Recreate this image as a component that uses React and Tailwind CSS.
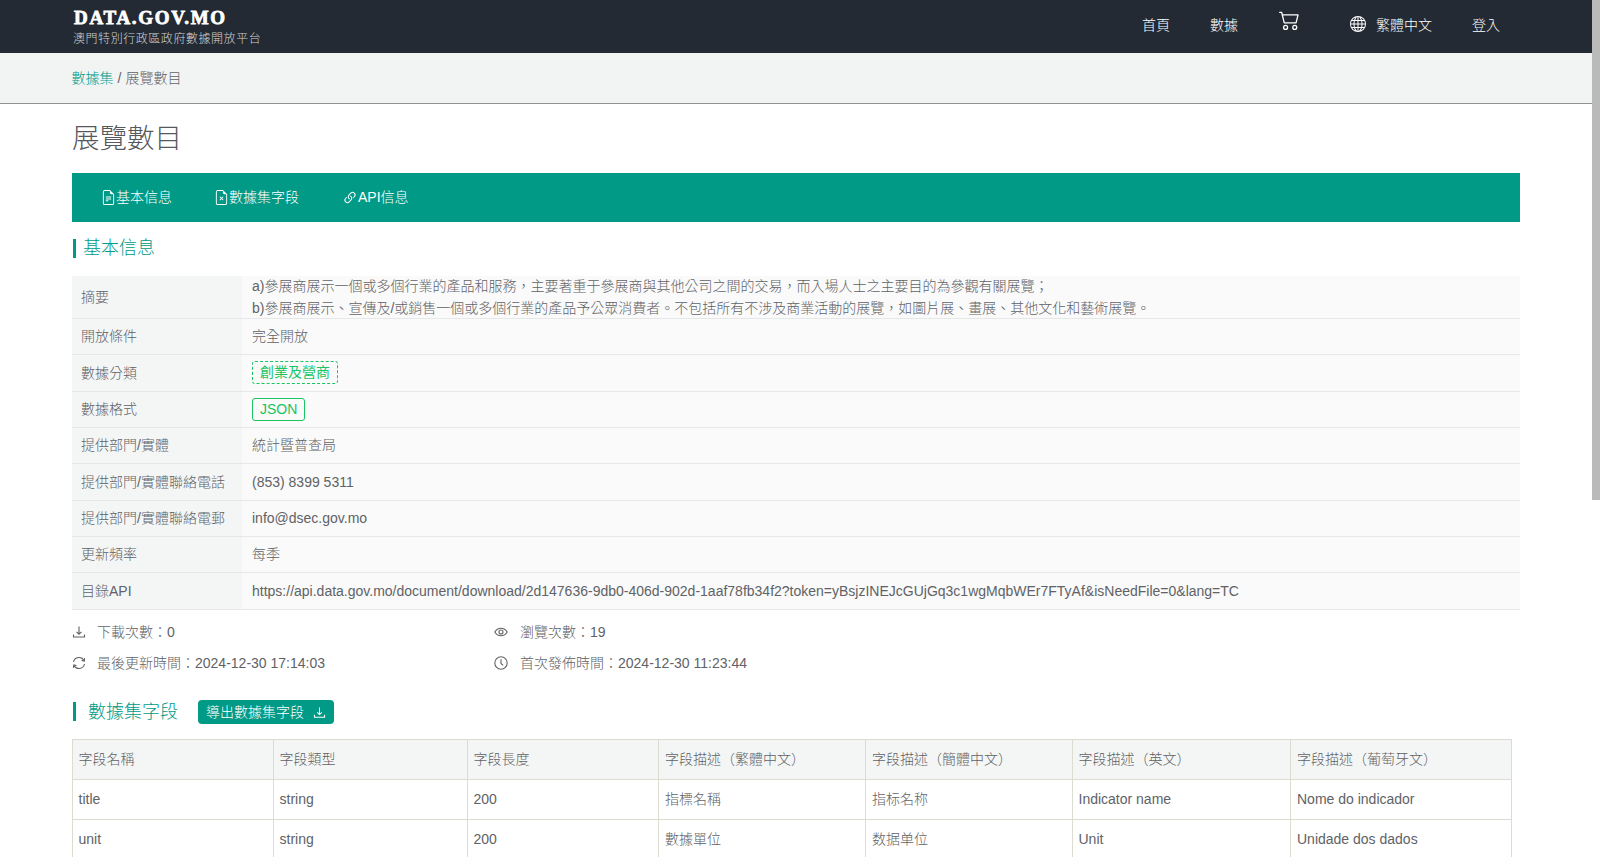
import React from "react";
import { BsCart2, BsGlobe, BsFileEarmarkText, BsFileEarmarkX, BsLink45Deg } from "react-icons/bs";

const font = "font-['Liberation_Sans','Noto_Sans_CJK_TC',sans-serif]";

const DownloadIcon = ({ className }) => (
  <svg viewBox="0 0 14 14" fill="none" stroke="currentColor" strokeWidth="1.1" className={className}>
    <path d="M7 1.5v7.5M4.5 6.8 7 9.2l2.5-2.4M1.5 9.5v2.5h11V9.5" />
  </svg>
);

const RefreshIcon = ({ className }) => (
  <svg viewBox="0 0 14 14" fill="none" stroke="currentColor" strokeWidth="1.1" className={className}>
    <path d="M1.5 6A5.6 5.6 0 0 1 12 4.6M12.5 8A5.6 5.6 0 0 1 2 9.4" />
    <path d="M12.6 2.2 12.2 5 9.6 4.4M1.4 11.8 1.8 9l2.6.6" />
  </svg>
);

const EyeIcon = ({ className }) => (
  <svg viewBox="0 0 14 14" fill="none" stroke="currentColor" strokeWidth="1.1" className={className}>
    <path d="M.8 7C2.2 4.6 4.4 3.2 7 3.2s4.8 1.4 6.2 3.8c-1.4 2.4-3.6 3.8-6.2 3.8S2.2 9.4.8 7Z" />
    <circle cx="7" cy="7" r="2" />
  </svg>
);

const ClockIcon = ({ className }) => (
  <svg viewBox="0 0 14 14" fill="none" stroke="currentColor" strokeWidth="1.1" className={className}>
    <circle cx="7" cy="7" r="6.2" />
    <path d="M7 3.2V7.4l2.2 2" />
  </svg>
);

const infoRows = [
  ["開放條件", "完全開放"],
  ["數據分類", <span className="mb-[1px] inline-flex h-[23px] items-center rounded-[3px] border border-dashed border-[#19c463] px-[7px] font-normal text-[#19c463]">創業及營商</span>],
  ["數據格式", <span className="inline-flex h-[23px] items-center rounded-[3px] border border-[#19c463] px-[7px] text-[#19c463]">JSON</span>],
  ["提供部門/實體", "統計暨普查局"],
  ["提供部門/實體聯絡電話", "(853) 8399 5311"],
  ["提供部門/實體聯絡電郵", "info@dsec.gov.mo"],
  ["更新頻率", "每季"],
  ["目錄API", "https://api.data.gov.mo/document/download/2d147636-9db0-406d-902d-1aaf78fb34f2?token=yBsjzINEJcGUjGq3c1wgMqbWEr7FTyAf&isNeedFile=0&lang=TC"],
];

const fieldHead = ["字段名稱", "字段類型", "字段長度", "字段描述（繁體中文）", "字段描述（簡體中文）", "字段描述（英文）", "字段描述（葡萄牙文）"];
const fieldRows = [
  ["title", "string", "200", "指標名稱", "指标名称", "Indicator name", "Nome do indicador"],
  ["unit", "string", "200", "數據單位", "数据单位", "Unit", "Unidade dos dados"],
];
const colWidths = ["w-[200.5px]", "w-[194px]", "w-[191.5px]", "w-[207px]", "w-[206.5px]", "w-[218.5px]", "w-[221px]"];

const Stat = ({ icon: Icon, label, value, className, gap }) => (
  <div className={`flex items-center ${className}`}>
    <Icon className={`mb-[1px] h-[14px] w-[14px] ${gap}`} />
    <span>
      {label}
      <span className="font-['Noto_Sans_CJK_TC']">：</span>
      {value}
    </span>
  </div>
);

export default function App() {
  return (
    <div className={`flex h-[857px] overflow-hidden bg-white text-[14px] font-light text-[#606266] ${font}`}>
      <div className="min-w-0 flex-1">
        <header className="flex h-[53px] items-center justify-between bg-[#232a33] pl-[74px] pr-[92px] text-white">
          <div>
            <div className="mt-[1px] font-['Liberation_Serif',serif] text-[19px] font-bold leading-[19px] tracking-[1.7px] [-webkit-text-stroke:0.8px_white]">DATA.GOV.MO</div>
            <div className="-ml-[1px] mt-[4px] text-[12px] leading-[16px] tracking-[0.55px] text-[#cfd2d4]">澳門特別行政區政府數據開放平台</div>
          </div>
          <nav className="-mt-[2px] flex items-center">
            <a className="mr-[40px]">首頁</a>
            <a className="mr-[40px]">數據</a>
            <BsCart2 className="mb-[12px] ml-[1px] mr-[50px] h-[21px] w-[21px]" />
            <BsGlobe className="mb-[4px] mr-[10px] h-[16px] w-[16px]" />
            <a className="mr-[40px]">繁體中文</a>
            <a>登入</a>
          </nav>
        </header>

        <div className="flex h-[51px] items-center border-b border-[#8f9193] bg-[#f2f4f4] pl-[71.5px]">
          <a className="text-[#009a87]">數據集</a>
          <span className="mx-[4px]">/</span>
          <span>展覽數目</span>
        </div>

        <main className="pl-[72px] pr-[72px]">
          <h1 className="flex h-[69px] items-center text-[27.5px] font-light text-[#55585c]">展覽數目</h1>

          <div className="flex h-[49px] items-center bg-[#009a87] pl-[29px] text-white">
            <a className="mr-[42px] flex items-center"><BsFileEarmarkText className="h-[15px] w-[15px]" />基本信息</a>
            <a className="mr-[44px] flex items-center"><BsFileEarmarkX className="h-[15px] w-[15px]" />數據集字段</a>
            <a className="flex items-center"><BsLink45Deg className="-ml-[1px] h-[16px] w-[16px]" />API信息</a>
          </div>

          <div className="ml-[1px] mt-[17px] flex h-[19px] items-center border-l-[3px] border-[#009a87] pl-[7px] text-[18px] text-[#009a87]">基本信息</div>

          <div className="mt-[18px] border-b border-[#e6e8e8]">
            <div className="flex h-[42px] bg-[#fafafa]">
              <div className="flex w-[170px] items-center bg-[#f4f6f6] pl-[9px]">摘要</div>
              <div className="flex-1 pl-[10px] leading-[21.5px]">
                a)參展商展示一個或多個行業的產品和服務，主要著重于參展商與其他公司之間的交易，而入場人士之主要目的為參觀有關展覽；<br />
                b)參展商展示、宣傳及/或銷售一個或多個行業的產品予公眾消費者。不包括所有不涉及商業活動的展覽，如圖片展、畫展、其他文化和藝術展覽。
              </div>
            </div>
            {infoRows.map(([label, value]) => (
              <div key={label} className="flex h-[36.35px] border-t border-[#e6e8e8] bg-[#fafafa]">
                <div className="flex w-[170px] items-center bg-[#f4f6f6] pl-[9px]">{label}</div>
                <div className="flex flex-1 items-center pl-[10px]">{value}</div>
              </div>
            ))}
          </div>

          <div className="mt-[7px] flex h-[31px] items-center">
            <Stat icon={DownloadIcon} gap="mr-[11px]" className="w-[422px]" label="下載次數" value="0" />
            <Stat icon={EyeIcon} gap="mr-[12px]" label="瀏覽次數" value="19" />
          </div>
          <div className="flex h-[31px] items-center">
            <Stat icon={RefreshIcon} gap="mr-[11px]" className="w-[422px]" label="最後更新時間" value="2024-12-30 17:14:03" />
            <Stat icon={ClockIcon} gap="mr-[12px]" label="首次發佈時間" value="2024-12-30 11:23:44" />
          </div>

          <div className="ml-[1px] mt-[21px] flex h-[24px] items-center">
            <div className="flex h-[19px] items-center border-l-[3px] border-[#009a87] pl-[12px] pt-[2px] text-[18px] text-[#009a87]">數據集字段</div>
            <a className="ml-[20px] flex h-[24px] w-[136px] items-center rounded-[4px] bg-[#009a87] pl-[8px] pt-[2px] text-white">
              導出數據集字段
              <DownloadIcon className="ml-[9px] h-[13px] w-[13px]" />
            </a>
          </div>

          <table className="mt-[15px] w-[1438px] table-fixed border-collapse border-[#dcdcd0]">
            <thead>
              <tr className="h-[40px] bg-[#f4f6f5]">
                {fieldHead.map((h, i) => (
                  <th key={h} className={`${colWidths[i]} border border-[#dcdcd0] px-[6px] text-left font-light first:pl-[5.5px]`}>{h}</th>
                ))}
              </tr>
            </thead>
            <tbody>
              {fieldRows.map((row) => (
                <tr key={row[0]} className="h-[40px]">
                  {row.map((c, i) => (
                    <td key={i} className="border border-[#dcdcd0] px-[6px] first:pl-[5.5px]">{c}</td>
                  ))}
                </tr>
              ))}
            </tbody>
          </table>
        </main>
      </div>
      <div className="w-[8px] shrink-0">
        <div className="h-[500px] bg-[#bababa]" />
      </div>
    </div>
  );
}
